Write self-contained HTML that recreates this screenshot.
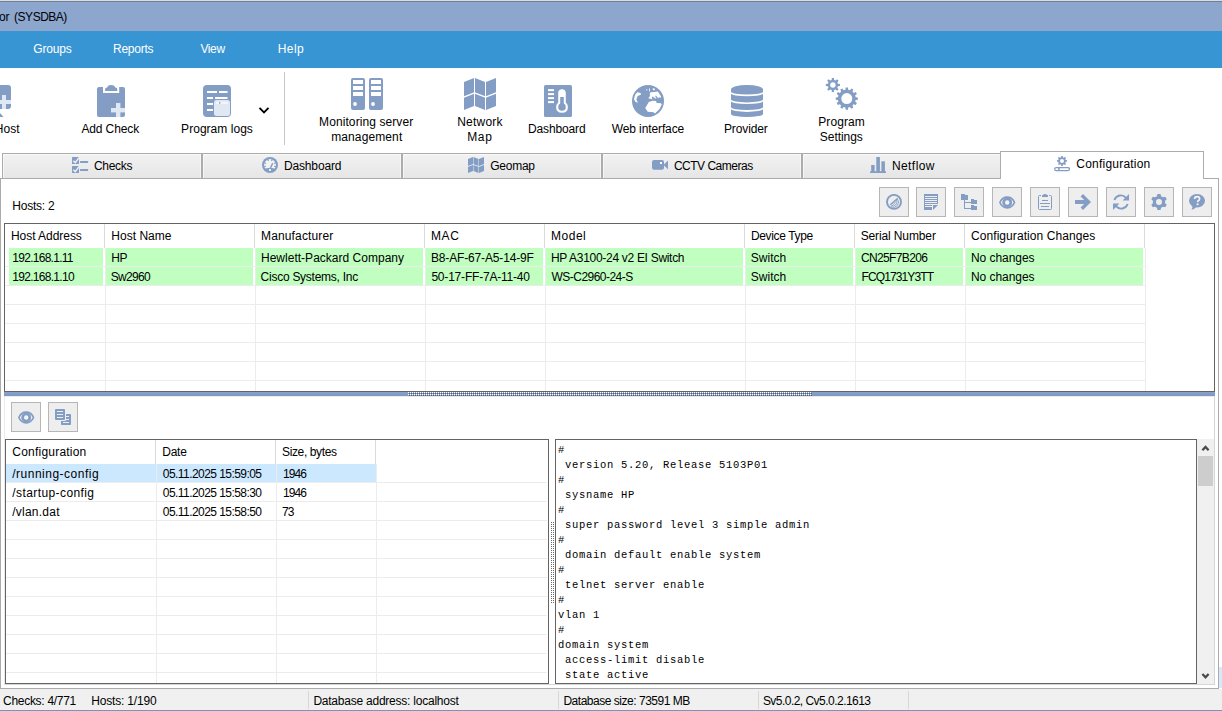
<!DOCTYPE html>
<html><head><meta charset="utf-8"><title>Configuration</title>
<style>
html,body{margin:0;padding:0;background:#fff;}
body{width:1222px;height:711px;position:relative;overflow:hidden;font-family:"Liberation Sans",sans-serif;font-size:12px;}
.a{position:absolute;}
.t{position:absolute;white-space:pre;font-family:"Liberation Sans",sans-serif;font-size:12px;line-height:14px;height:14px;}
</style></head>
<body>
<div class="a" style="left:0px;top:0px;width:1222px;height:1px;background:#dedcd8;"></div>
<div class="a" style="left:0px;top:1px;width:1222px;height:1px;background:#6b80a1;"></div>
<div class="a" style="left:0px;top:2px;width:1222px;height:29px;background:#8ca6ce;"></div>
<div class="a" style="left:0px;top:31px;width:1222px;height:37px;background:#3895d4;"></div>
<div class="a" style="left:284px;top:72px;width:1px;height:73px;background:#c6c6c6;"></div>
<svg class="a" style="left:-17px;top:85px" width="28" height="32" viewBox="0 0 28 32">
      <rect x="0" y="0" width="28" height="24" rx="3" fill="#839dc4"/>
      <rect x="19" y="10" width="4" height="14" fill="#e0e8f3"/><rect x="14" y="15" width="14" height="4" fill="#e0e8f3"/>
      <path d="M17 28 L20.5 32 L10 32 L10 28 Z" fill="#839dc4"/></svg>
<svg class="a" style="left:97px;top:85px" width="28" height="32" viewBox="0 0 28 32">
      <path d="M2 2 H6 V8 H22.2 V2 H26 Q28 2 28 4 V30 Q28 32 26 32 H2 Q0 32 0 30 V4 Q0 2 2 2 Z" fill="#839dc4"/>
      <path d="M8.1 5.9 V4.2 Q8.1 2.6 10 2.4 Q11 0 14.2 0 Q17.4 0 18.4 2.4 Q20.3 2.6 20.3 4.2 V5.9 Z" fill="#839dc4"/>
      <rect x="19" y="18" width="4.4" height="14" fill="#e0e8f3"/><rect x="14" y="23" width="14" height="4.4" fill="#e0e8f3"/></svg>
<svg class="a" style="left:203px;top:85px" width="28" height="32" viewBox="0 0 28 32">
      <rect x="0" y="0" width="28" height="32" rx="4" fill="#839dc4"/>
      <g fill="#fff"><rect x="4" y="6" width="10" height="2"/><rect x="16" y="6" width="8.5" height="2"/>
      <rect x="4" y="12" width="6" height="2"/><rect x="12" y="12" width="12.5" height="2"/>
      <rect x="4" y="18" width="6" height="2"/><rect x="4" y="24" width="6" height="2"/></g>
      <rect x="11" y="15" width="16" height="16" rx="2.5" fill="#e0e8f3"/>
      <rect x="13" y="17.3" width="12" height="1.2" fill="#fff"/><rect x="16" y="17.2" width="1.4" height="1.4" fill="#839dc4"/></svg>
<svg class="a" style="left:258px;top:106px" width="12" height="9" viewBox="0 0 12 9"><path d="M1.5 1.8 L6 6.3 L10.5 1.8" fill="none" stroke="#000" stroke-width="1.9"/></svg>
<svg class="a" style="left:351px;top:78px" width="32" height="32" viewBox="0 0 32 32"><rect x="0" y="0" width="14" height="32" rx="2" fill="#839dc4"/>
      <g fill="#fff"><rect x="2" y="2" width="10" height="4"/><rect x="2" y="8" width="10" height="4"/><rect x="2" y="14" width="10" height="4"/>
      <circle cx="4" cy="26" r="1.9"/></g><rect x="18" y="0" width="14" height="32" rx="2" fill="#839dc4"/>
      <g fill="#fff"><rect x="20" y="2" width="10" height="4"/><rect x="20" y="8" width="10" height="4"/><rect x="20" y="14" width="10" height="4"/>
      <circle cx="22" cy="26" r="1.9"/></g></svg>
<svg class="a" style="left:464px;top:78px" width="32.0" height="32.0" viewBox="0 0 32 32"><g fill="#839dc4">
          <path d="M0 4 L10 0 V28 L0 32 Z"/><path d="M11 0 L21 4 V32 L11 28 Z"/><path d="M22 4 L32 0 V28 L22 32 Z"/></g>
          <g stroke="#fff" stroke-width="1.4" fill="none"><path d="M-1 19.4 L10.5 14.8"/><path d="M10.5 14.8 L21.5 19.2"/><path d="M21.5 19.2 L33 14.6"/></g></svg>
<svg class="a" style="left:544px;top:85px" width="28" height="32" viewBox="0 0 28 32">
      <rect x="0" y="0" width="28" height="32" rx="1.6" fill="#839dc4"/>
      <g fill="#fff"><rect x="4" y="4.1" width="6" height="2"/><rect x="4" y="8.1" width="6" height="2"/><rect x="4" y="12.1" width="6" height="2"/><rect x="4" y="16.1" width="6" height="2"/>
      <path d="M14.2 8 Q14.2 4.2 18 4.2 Q21.8 4.2 21.8 8 V17.6 Q23.9 19.2 23.9 22 Q23.9 27.8 18 27.8 Q12.1 27.8 12.1 22 Q12.1 19.2 14.2 17.6 Z"/></g>
      <path d="M16.2 12 H19.8 V18.6 Q21.8 19.6 21.8 22 Q21.8 25.8 18 25.8 Q14.2 25.8 14.2 22 Q14.2 19.6 16.2 18.6 Z" fill="#839dc4"/></svg>
<svg class="a" style="left:632px;top:85px" width="32" height="32" viewBox="0 0 32 32">
      <circle cx="16" cy="16" r="16" fill="#839dc4"/>
      <g fill="#fff">
      <path d="M5.3 7.3 L8.7 8.1 L8.9 9.8 L5.6 10.9 L4.4 14.6 L5.9 17.7 L3.3 16.8 L1.9 14 L3.3 9.5 Z"/>
      <path d="M17.7 8.7 L18.5 7.3 L22.4 7 L25.8 6.4 L27.5 8.9 L29.2 11.8 L28.2 13 L27 12 L26.2 13.6 L25 12.2 L24 14 L22.8 12.6 L21.6 14.2 L20.2 14.3 L16.3 13.2 L17.7 11.2 Z"/>
      <path d="M14.6 20.8 L16.8 17.1 L20.8 15.7 L24.1 16 L24.4 17.7 L28.9 18.2 L29.8 19.6 L27.5 24.1 L23 28.6 L21.6 27.2 L15.7 26.7 L13.2 23 Z"/>
      <path d="M14 4.2 L15.4 4.4 L15.2 5.4 L14.2 5.2 Z M17.1 3.3 L17.9 3.4 L17.8 6.4 L17 6.2 Z M20.5 3.4 L22.4 3.3 L23 5.2 L21.2 5.3 Z"/>
      </g>
      <path d="M19.9 12.2 L21 11.6 L22.4 12.9 L21.9 14.5 L20.2 14.5 Z M23 10.9 L24.1 10.6 L25.8 12.9 L24.7 13.4 Z M17.3 9.2 L18.3 9.8 L17.7 11.5 L17 10.9 Z" fill="#839dc4"/></svg>
<svg class="a" style="left:731px;top:85px" width="32" height="32" viewBox="0 0 32 32">
      <g fill="#839dc4">
      <path d="M0 4.6 A16 4.6 0 0 1 32 4.6 V6.8 A16 2.6 0 0 1 0 6.8 Z"/>
      <path d="M0 8.4 A16 2.8 0 0 0 32 8.4 V14.6 A16 2.8 0 0 1 0 14.6 Z"/>
      <path d="M0 16.3 A16 2.8 0 0 0 32 16.3 V22.3 A16 2.8 0 0 1 0 22.3 Z"/>
      <path d="M0 24.1 A16 2.8 0 0 0 32 24.1 V28.9 A16 3 0 0 1 0 28.9 Z"/>
      </g></svg>
<svg class="a" style="left:824px;top:76px" width="36" height="36" viewBox="0 0 36 36"><path d="M13.96 7.79 L15.91 7.89 L15.91 10.11 L13.96 10.21 L13.33 11.72 L14.64 13.17 L13.07 14.74 L11.62 13.43 L10.11 14.06 L10.01 16.01 L7.79 16.01 L7.69 14.06 L6.18 13.43 L4.73 14.74 L3.16 13.17 L4.47 11.72 L3.84 10.21 L1.89 10.11 L1.89 7.89 L3.84 7.79 L4.47 6.28 L3.16 4.83 L4.73 3.26 L6.18 4.57 L7.69 3.94 L7.79 1.99 L10.01 1.99 L10.11 3.94 L11.62 4.57 L13.07 3.26 L14.64 4.83 L13.33 6.28 Z M11.60 9.00 A2.7 2.7 0 1 0 6.20 9.00 A2.7 2.7 0 1 0 11.60 9.00 Z" fill="#839dc4" fill-rule="evenodd"/><path d="M31.69 21.19 L33.84 21.44 L33.84 23.76 L31.69 24.01 L31.20 25.83 L32.94 27.11 L31.78 29.12 L29.79 28.26 L28.46 29.59 L29.32 31.58 L27.31 32.74 L26.03 31.00 L24.21 31.49 L23.96 33.64 L21.64 33.64 L21.39 31.49 L19.57 31.00 L18.29 32.74 L16.28 31.58 L17.14 29.59 L15.81 28.26 L13.82 29.12 L12.66 27.11 L14.40 25.83 L13.91 24.01 L11.76 23.76 L11.76 21.44 L13.91 21.19 L14.40 19.37 L12.66 18.09 L13.82 16.08 L15.81 16.94 L17.14 15.61 L16.28 13.62 L18.29 12.46 L19.57 14.20 L21.39 13.71 L21.64 11.56 L23.96 11.56 L24.21 13.71 L26.03 14.20 L27.31 12.46 L29.32 13.62 L28.46 15.61 L29.79 16.94 L31.78 16.08 L32.94 18.09 L31.20 19.37 Z M28.30 22.60 A5.5 5.5 0 1 0 17.30 22.60 A5.5 5.5 0 1 0 28.30 22.60 Z" fill="#839dc4" fill-rule="evenodd"/></svg>
<div class="a" style="left:2px;top:153px;width:200px;height:26px;background:linear-gradient(#f2f2f2,#e6e6e6);border:1px solid #acacac;box-sizing:border-box;box-shadow:inset 1px 1px 0 rgba(255,255,255,.55), inset -1px 0 0 rgba(255,255,255,.55);"></div>
<div class="a" style="left:202px;top:153px;width:200px;height:26px;background:linear-gradient(#f2f2f2,#e6e6e6);border:1px solid #acacac;box-sizing:border-box;box-shadow:inset 1px 1px 0 rgba(255,255,255,.55), inset -1px 0 0 rgba(255,255,255,.55);"></div>
<div class="a" style="left:402px;top:153px;width:200px;height:26px;background:linear-gradient(#f2f2f2,#e6e6e6);border:1px solid #acacac;box-sizing:border-box;box-shadow:inset 1px 1px 0 rgba(255,255,255,.55), inset -1px 0 0 rgba(255,255,255,.55);"></div>
<div class="a" style="left:602px;top:153px;width:200px;height:26px;background:linear-gradient(#f2f2f2,#e6e6e6);border:1px solid #acacac;box-sizing:border-box;box-shadow:inset 1px 1px 0 rgba(255,255,255,.55), inset -1px 0 0 rgba(255,255,255,.55);"></div>
<div class="a" style="left:802px;top:153px;width:200px;height:26px;background:linear-gradient(#f2f2f2,#e6e6e6);border:1px solid #acacac;box-sizing:border-box;box-shadow:inset 1px 1px 0 rgba(255,255,255,.55), inset -1px 0 0 rgba(255,255,255,.55);"></div>
<div class="a" style="left:0;top:178px;width:1219px;height:511px;border:1px solid #ababab;box-sizing:border-box;background:#fff"></div>
<div class="a" style="left:1000px;top:151px;width:204px;height:28px;border:1px solid #acacac;border-bottom:none;box-sizing:border-box;background:#fff"></div>
<svg class="a" style="left:72px;top:157px" width="17" height="16" viewBox="0 0 17 16"><g fill="#839dc4"><rect x="0" y="0" width="7" height="7" rx="0.5"/><rect x="0" y="9" width="7" height="7" rx="0.5"/>
      <rect x="8" y="4" width="8.1" height="2" rx="0.4"/><rect x="8" y="12" width="8.1" height="2" rx="0.4"/></g>
      <g stroke="#f1f1ef" stroke-width="1.5" fill="none"><path d="M1.2 3.8 L3.3 5.6 L7 0.6"/><path d="M1.2 12.8 L3.3 14.6 L7 9.6"/></g></svg>
<svg class="a" style="left:262px;top:157px" width="16" height="16" viewBox="0 0 16 16"><circle cx="8" cy="8" r="8" fill="#839dc4"/>
      <path d="M3.3 11.57 L8 10.7 L12.7 11.57 A5.9 5.9 0 1 0 3.3 11.57 Z" fill="#f3f3f1"/>
      <g stroke="#839dc4" stroke-width="1.1"><path d="M2.31 5.81 L3.99 6.46"/><path d="M5.81 2.31 L6.46 3.99"/><path d="M10.19 2.31 L9.54 3.99"/><path d="M13.69 5.81 L12.01 6.46"/><path d="M13.83 9.78 L12.11 9.26"/><path d="M2.17 9.78 L3.89 9.26"/><path d="M8.5 10.9 L10.7 6.1" stroke-width="1.35"/></g>
      <rect x="7" y="12" width="2" height="1.9" fill="#f3f3f1"/></svg>
<svg class="a" style="left:468px;top:157px" width="16.0" height="16.0" viewBox="0 0 32 32"><g fill="#839dc4">
          <path d="M0 4 L10 0 V28 L0 32 Z"/><path d="M11 0 L21 4 V32 L11 28 Z"/><path d="M22 4 L32 0 V28 L22 32 Z"/></g>
          <g stroke="#fff" stroke-width="1.4" fill="none"><path d="M-1 19.4 L10.5 14.8"/><path d="M10.5 14.8 L21.5 19.2"/><path d="M21.5 19.2 L33 14.6"/></g></svg>
<svg class="a" style="left:652px;top:159px" width="17" height="12" viewBox="0 0 17 12"><rect x="0" y="1" width="12" height="9.8" rx="2" fill="#839dc4"/><path d="M11.5 5.9 L16 1.6 V10.2 Z" fill="#839dc4"/><rect x="8" y="3" width="2" height="2" fill="#fff"/></svg>
<svg class="a" style="left:870px;top:157px" width="16" height="16" viewBox="0 0 16 16"><g fill="#839dc4"><rect x="1.2" y="8" width="3.4" height="7"/><rect x="6.3" y="0" width="3.6" height="15"/><rect x="11.4" y="4.3" width="3.5" height="11"/><rect x="0" y="14.2" width="16" height="1.8" rx="0.6"/></g></svg>
<svg class="a" style="left:1054px;top:155px" width="16" height="17" viewBox="0 0 16 17"><path d="M11.69 5.03 L13.04 5.19 L13.04 6.71 L11.69 6.87 L11.26 7.91 L12.10 8.98 L11.03 10.05 L9.96 9.21 L8.92 9.64 L8.76 10.99 L7.24 10.99 L7.08 9.64 L6.04 9.21 L4.97 10.05 L3.90 8.98 L4.74 7.91 L4.31 6.87 L2.96 6.71 L2.96 5.19 L4.31 5.03 L4.74 3.99 L3.90 2.92 L4.97 1.85 L6.04 2.69 L7.08 2.26 L7.24 0.91 L8.76 0.91 L8.92 2.26 L9.96 2.69 L11.03 1.85 L12.10 2.92 L11.26 3.99 Z M10.00 5.95 A2.0 2.0 0 1 0 6.00 5.95 A2.0 2.0 0 1 0 10.00 5.95 Z" fill="#839dc4" fill-rule="evenodd"/>
      <rect x="0.65" y="12.5" width="14.8" height="3.1" rx="1.55" fill="#fff" stroke="#839dc4" stroke-width="1.25"/><rect x="4.1" y="12.5" width="1.6" height="3.1" fill="#839dc4"/></svg>
<div class="a" style="left:879px;top:187px;width:30px;height:30px;background:#eeeeee;border:1px solid #b6b6b6;box-sizing:border-box;"></div>
<div class="a" style="left:916px;top:187px;width:30px;height:30px;background:#eeeeee;border:1px solid #b6b6b6;box-sizing:border-box;"></div>
<div class="a" style="left:954px;top:187px;width:30px;height:30px;background:#eeeeee;border:1px solid #b6b6b6;box-sizing:border-box;"></div>
<div class="a" style="left:992px;top:187px;width:30px;height:30px;background:#eeeeee;border:1px solid #b6b6b6;box-sizing:border-box;"></div>
<div class="a" style="left:1030px;top:187px;width:30px;height:30px;background:#eeeeee;border:1px solid #b6b6b6;box-sizing:border-box;"></div>
<div class="a" style="left:1068px;top:187px;width:30px;height:30px;background:#eeeeee;border:1px solid #b6b6b6;box-sizing:border-box;"></div>
<div class="a" style="left:1106px;top:187px;width:30px;height:30px;background:#eeeeee;border:1px solid #b6b6b6;box-sizing:border-box;"></div>
<div class="a" style="left:1144px;top:187px;width:30px;height:30px;background:#eeeeee;border:1px solid #b6b6b6;box-sizing:border-box;"></div>
<div class="a" style="left:1182px;top:187px;width:30px;height:30px;background:#eeeeee;border:1px solid #b6b6b6;box-sizing:border-box;"></div>
<div class="a" style="left:11px;top:402px;width:30px;height:30px;background:#eeeeee;border:1px solid #b6b6b6;box-sizing:border-box;"></div>
<div class="a" style="left:48px;top:402px;width:30px;height:30px;background:#eeeeee;border:1px solid #b6b6b6;box-sizing:border-box;"></div>
<svg class="a" style="left:886px;top:194px" width="16" height="16" viewBox="0 0 16 16"><circle cx="8" cy="7.9" r="7" fill="none" stroke="#839dc4" stroke-width="1.9"/>
      <g fill="none" stroke="#839dc4" stroke-width="0.9"><path d="M8.73 6.85 A1.9 1.9 0 0 1 6.13 9.60"/><path d="M10.02 5.74 A3.6 3.6 0 0 1 5.08 10.94"/><path d="M11.40 4.90 A5.2 5.2 0 0 1 4.70 12.60"/><path d="M4.2 10.8 L11.8 4.2" stroke-width="1.3"/></g></svg>
<svg class="a" style="left:924px;top:194px" width="14" height="16" viewBox="0 0 14 16"><g fill="#839dc4" shape-rendering="crispEdges"><rect x="0" y="0" width="14" height="10"/><rect x="0" y="10" width="8" height="6"/></g><path d="M9 11 H14 L9 16 Z" fill="#839dc4"/>
      <g fill="#eee" shape-rendering="crispEdges"><rect x="1" y="2" width="12" height="1"/><rect x="1" y="4" width="12" height="1"/><rect x="1" y="6" width="12" height="1"/><rect x="1" y="8" width="12" height="1"/><rect x="1" y="10" width="7" height="1"/><rect x="1" y="12" width="7" height="1"/></g></svg>
<svg class="a" style="left:961px;top:194px" width="16" height="16" viewBox="0 0 16 16"><g fill="#839dc4" shape-rendering="crispEdges"><rect x="0" y="0" width="4" height="1"/><rect x="0" y="1" width="7" height="5"/>
      <rect x="10" y="5" width="3" height="1"/><rect x="10" y="6" width="6" height="4"/><rect x="10" y="11" width="3" height="1"/><rect x="10" y="12" width="6" height="4"/>
      <rect x="3" y="6" width="1" height="9"/><rect x="3" y="8" width="7" height="1"/><rect x="3" y="14" width="7" height="1"/></g></svg>
<svg class="a" style="left:998.8px;top:195.5px" width="17" height="13" viewBox="0 0 17 13"><path d="M0.9 6.5 C2.2 3.3 5.4 1.2 8.2 1.2 C11 1.2 14.2 3.3 15.5 6.5 C14.2 9.7 11 11.8 8.2 11.8 C5.4 11.8 2.2 9.7 0.9 6.5 Z" fill="#f1f1f1" stroke="#839dc4" stroke-width="1.7" stroke-linejoin="round"/>
          <circle cx="8.2" cy="6.5" r="4.9" fill="#839dc4"/><circle cx="8.2" cy="6.5" r="2.2" fill="#f4f4f4"/></svg>
<svg class="a" style="left:1038px;top:194px" width="14" height="16" viewBox="0 0 14 16"><path d="M3 1.5 H1.5 Q0.5 1.5 0.5 2.5 V14.5 Q0.5 15.5 1.5 15.5 H12.5 Q13.5 15.5 13.5 14.5 V2.5 Q13.5 1.5 12.5 1.5 H11.2" fill="none" stroke="#839dc4" stroke-width="1"/>
      <path d="M4 3 V1.6 Q4 1 4.8 1 H5 Q5.4 0 7 0 Q8.6 0 9 1 H9.2 Q10 1 10 1.6 V3 Z" fill="#839dc4"/>
      <g fill="#839dc4" shape-rendering="crispEdges"><rect x="4" y="6" width="6" height="1"/><rect x="2" y="9" width="10" height="1"/><rect x="3" y="12" width="8" height="1"/></g></svg>
<svg class="a" style="left:1074px;top:193px" width="18" height="18" viewBox="0 0 18 18"><path d="M1 7 H10.2 L6.6 3.4 L9 1 L17 9 L9 17 L6.6 14.6 L10.2 11 H1 Z" fill="#839dc4"/></svg>
<svg class="a" style="left:1113px;top:194px" width="16" height="16" viewBox="0 0 16 16"><g fill="none" stroke="#839dc4" stroke-width="1.9"><path d="M1.4 6 A6.8 6.8 0 0 1 13 3.8"/><path d="M14.6 10 A6.8 6.8 0 0 1 3 12.2"/></g>
      <path d="M16 0 V6.4 H9.6 Z" fill="#839dc4"/><path d="M0 16 V9.6 H6.4 Z" fill="#839dc4"/></svg>
<svg class="a" style="left:1151px;top:194px" width="16" height="16" viewBox="0 0 16 16"><path d="M14.09 9.16 L15.74 10.70 L14.21 13.36 L12.05 12.69 L10.04 13.86 L9.54 16.05 L6.46 16.05 L5.96 13.86 L3.95 12.69 L1.79 13.36 L0.26 10.70 L1.91 9.16 L1.91 6.84 L0.26 5.30 L1.79 2.64 L3.95 3.31 L5.96 2.14 L6.46 -0.05 L9.54 -0.05 L10.04 2.14 L12.05 3.31 L14.21 2.64 L15.74 5.30 L14.09 6.84 Z M11.00 8.00 A3 3 0 1 0 5.00 8.00 A3 3 0 1 0 11.00 8.00 Z" fill="#839dc4" fill-rule="evenodd"/></svg>
<svg class="a" style="left:1189px;top:194px" width="16" height="16" viewBox="0 0 16 16"><ellipse cx="8" cy="6.7" rx="8" ry="6.7" fill="#839dc4"/><path d="M3.4 11 Q3.8 14 2.4 15.8 Q6 15 7.6 12.6 Z" fill="#839dc4"/>
      <path d="M5.6 5 Q5.6 2.6 8.1 2.6 Q10.6 2.6 10.6 4.8 Q10.6 6.2 9.2 6.8 Q8.6 7.1 8.6 8.2" fill="none" stroke="#f4f4f4" stroke-width="1.7"/><rect x="7.7" y="9.4" width="1.8" height="1.8" fill="#f4f4f4"/></svg>
<svg class="a" style="left:17.8px;top:410.5px" width="17" height="13" viewBox="0 0 17 13"><path d="M0.9 6.5 C2.2 3.3 5.4 1.2 8.2 1.2 C11 1.2 14.2 3.3 15.5 6.5 C14.2 9.7 11 11.8 8.2 11.8 C5.4 11.8 2.2 9.7 0.9 6.5 Z" fill="#f1f1f1" stroke="#839dc4" stroke-width="1.7" stroke-linejoin="round"/>
          <circle cx="8.2" cy="6.5" r="4.9" fill="#839dc4"/><circle cx="8.2" cy="6.5" r="2.2" fill="#f4f4f4"/></svg>
<svg class="a" style="left:55px;top:409px" width="16" height="16" viewBox="0 0 16 16"><rect x="0" y="0" width="10" height="11" rx="1" fill="#839dc4"/>
      <path d="M11 5.6 Q11 5 11.6 5 H15.2 Q16 5 16 5.8 V15.2 Q16 16 15.2 16 H6.8 Q6 16 6 15.2 V12 H10.2 L11 11.2 Z" fill="#839dc4"/>
      <g fill="#eee" shape-rendering="crispEdges"><rect x="2" y="2" width="6" height="1"/><rect x="2" y="5" width="6" height="1"/><rect x="2" y="8" width="6" height="1"/>
      <rect x="11" y="7" width="3" height="1"/><rect x="11" y="10" width="3" height="1"/><rect x="8" y="13" width="6" height="1"/></g></svg>
<div class="a" style="left:4px;top:223px;width:1211px;height:169px;border:1px solid #646464;box-sizing:border-box;background:#fff"></div>
<div class="a" style="left:5px;top:266px;width:1140px;height:1px;background:#ececec;"></div>
<div class="a" style="left:5px;top:285px;width:1140px;height:1px;background:#ececec;"></div>
<div class="a" style="left:5px;top:304px;width:1140px;height:1px;background:#ececec;"></div>
<div class="a" style="left:5px;top:323px;width:1140px;height:1px;background:#ececec;"></div>
<div class="a" style="left:5px;top:342px;width:1140px;height:1px;background:#ececec;"></div>
<div class="a" style="left:5px;top:361px;width:1140px;height:1px;background:#ececec;"></div>
<div class="a" style="left:5px;top:380px;width:1140px;height:1px;background:#ececec;"></div>
<div class="a" style="left:104px;top:224px;width:1px;height:24px;background:#dadada;"></div>
<div class="a" style="left:105px;top:248px;width:1px;height:143px;background:#ececec;"></div>
<div class="a" style="left:254px;top:224px;width:1px;height:24px;background:#dadada;"></div>
<div class="a" style="left:255px;top:248px;width:1px;height:143px;background:#ececec;"></div>
<div class="a" style="left:424px;top:224px;width:1px;height:24px;background:#dadada;"></div>
<div class="a" style="left:425px;top:248px;width:1px;height:143px;background:#ececec;"></div>
<div class="a" style="left:544px;top:224px;width:1px;height:24px;background:#dadada;"></div>
<div class="a" style="left:545px;top:248px;width:1px;height:143px;background:#ececec;"></div>
<div class="a" style="left:744px;top:224px;width:1px;height:24px;background:#dadada;"></div>
<div class="a" style="left:745px;top:248px;width:1px;height:143px;background:#ececec;"></div>
<div class="a" style="left:854px;top:224px;width:1px;height:24px;background:#dadada;"></div>
<div class="a" style="left:855px;top:248px;width:1px;height:143px;background:#ececec;"></div>
<div class="a" style="left:964px;top:224px;width:1px;height:24px;background:#dadada;"></div>
<div class="a" style="left:965px;top:248px;width:1px;height:143px;background:#ececec;"></div>
<div class="a" style="left:1144px;top:224px;width:1px;height:24px;background:#dadada;"></div>
<div class="a" style="left:1145px;top:248px;width:1px;height:143px;background:#ececec;"></div>
<div class="a" style="left:9px;top:248px;width:94px;height:18px;background:#c0ffc0;"></div>
<div class="a" style="left:106px;top:248px;width:147px;height:18px;background:#c0ffc0;"></div>
<div class="a" style="left:256px;top:248px;width:167px;height:18px;background:#c0ffc0;"></div>
<div class="a" style="left:426px;top:248px;width:117px;height:18px;background:#c0ffc0;"></div>
<div class="a" style="left:546px;top:248px;width:197px;height:18px;background:#c0ffc0;"></div>
<div class="a" style="left:746px;top:248px;width:107px;height:18px;background:#c0ffc0;"></div>
<div class="a" style="left:856px;top:248px;width:107px;height:18px;background:#c0ffc0;"></div>
<div class="a" style="left:966px;top:248px;width:177px;height:18px;background:#c0ffc0;"></div>
<div class="a" style="left:103px;top:248px;width:5px;height:18px;background:transparent;"></div>
<div class="a" style="left:253px;top:248px;width:5px;height:18px;background:transparent;"></div>
<div class="a" style="left:423px;top:248px;width:5px;height:18px;background:transparent;"></div>
<div class="a" style="left:543px;top:248px;width:5px;height:18px;background:transparent;"></div>
<div class="a" style="left:743px;top:248px;width:5px;height:18px;background:transparent;"></div>
<div class="a" style="left:853px;top:248px;width:5px;height:18px;background:transparent;"></div>
<div class="a" style="left:963px;top:248px;width:5px;height:18px;background:transparent;"></div>
<div class="a" style="left:9px;top:267px;width:94px;height:18px;background:#c0ffc0;"></div>
<div class="a" style="left:106px;top:267px;width:147px;height:18px;background:#c0ffc0;"></div>
<div class="a" style="left:256px;top:267px;width:167px;height:18px;background:#c0ffc0;"></div>
<div class="a" style="left:426px;top:267px;width:117px;height:18px;background:#c0ffc0;"></div>
<div class="a" style="left:546px;top:267px;width:197px;height:18px;background:#c0ffc0;"></div>
<div class="a" style="left:746px;top:267px;width:107px;height:18px;background:#c0ffc0;"></div>
<div class="a" style="left:856px;top:267px;width:107px;height:18px;background:#c0ffc0;"></div>
<div class="a" style="left:966px;top:267px;width:177px;height:18px;background:#c0ffc0;"></div>
<div class="a" style="left:103px;top:267px;width:5px;height:18px;background:transparent;"></div>
<div class="a" style="left:253px;top:267px;width:5px;height:18px;background:transparent;"></div>
<div class="a" style="left:423px;top:267px;width:5px;height:18px;background:transparent;"></div>
<div class="a" style="left:543px;top:267px;width:5px;height:18px;background:transparent;"></div>
<div class="a" style="left:743px;top:267px;width:5px;height:18px;background:transparent;"></div>
<div class="a" style="left:853px;top:267px;width:5px;height:18px;background:transparent;"></div>
<div class="a" style="left:963px;top:267px;width:5px;height:18px;background:transparent;"></div>
<div class="a" style="left:4px;top:392px;width:1211px;height:4px;background:linear-gradient(#87a2ca,#7c98c1)"></div>
<svg class="a" style="left:408px;top:392px" width="404" height="4"><defs><pattern id="gp" width="2" height="2" patternUnits="userSpaceOnUse"><rect width="2" height="2" fill="#809cc4"/><rect width="1" height="1" fill="#fff"/><rect x="1" y="1" width="1" height="1" fill="#5f5f5f"/></pattern></defs><rect width="404" height="4" fill="url(#gp)"/></svg>
<div class="a" style="left:4px;top:396px;width:1211px;height:289px;border:1px solid #d6d6d6;border-top-color:#ebebeb;border-left-color:#ebebeb;box-sizing:border-box"></div>
<div class="a" style="left:5px;top:439px;width:544px;height:245px;border:1px solid #646464;box-sizing:border-box;background:#fff"></div>
<div class="a" style="left:6px;top:482px;width:541px;height:1px;background:#ececec;"></div>
<div class="a" style="left:6px;top:501px;width:541px;height:1px;background:#ececec;"></div>
<div class="a" style="left:6px;top:520px;width:541px;height:1px;background:#ececec;"></div>
<div class="a" style="left:6px;top:539px;width:541px;height:1px;background:#ececec;"></div>
<div class="a" style="left:6px;top:558px;width:541px;height:1px;background:#ececec;"></div>
<div class="a" style="left:6px;top:577px;width:541px;height:1px;background:#ececec;"></div>
<div class="a" style="left:6px;top:596px;width:541px;height:1px;background:#ececec;"></div>
<div class="a" style="left:6px;top:615px;width:541px;height:1px;background:#ececec;"></div>
<div class="a" style="left:6px;top:634px;width:541px;height:1px;background:#ececec;"></div>
<div class="a" style="left:6px;top:653px;width:541px;height:1px;background:#ececec;"></div>
<div class="a" style="left:6px;top:672px;width:541px;height:1px;background:#ececec;"></div>
<div class="a" style="left:155px;top:440px;width:1px;height:24px;background:#dadada;"></div>
<div class="a" style="left:156px;top:464px;width:1px;height:219px;background:#ececec;"></div>
<div class="a" style="left:275px;top:440px;width:1px;height:24px;background:#dadada;"></div>
<div class="a" style="left:276px;top:464px;width:1px;height:219px;background:#ececec;"></div>
<div class="a" style="left:375px;top:440px;width:1px;height:24px;background:#dadada;"></div>
<div class="a" style="left:376px;top:464px;width:1px;height:219px;background:#ececec;"></div>
<div class="a" style="left:6px;top:464px;width:150px;height:18px;background:#cce8ff;"></div>
<div class="a" style="left:157px;top:464px;width:119px;height:18px;background:#cce8ff;"></div>
<div class="a" style="left:277px;top:464px;width:99px;height:18px;background:#cce8ff;"></div>
<svg class="a" style="left:550px;top:521px" width="4" height="82"><rect width="4" height="82" fill="url(#gp2)"/><defs><pattern id="gp2" width="2" height="2" patternUnits="userSpaceOnUse"><rect width="2" height="2" fill="#fff"/><rect x="1" y="1" width="1" height="1" fill="#6a6a6a"/></pattern></defs></svg>
<div class="a" style="left:555px;top:439px;width:642px;height:245px;border:1px solid #646464;box-sizing:border-box;background:#fff"></div>
<div class="a" style="left:1197px;top:439px;width:17px;height:245px;background:#f0f0f0;"></div>
<div class="a" style="left:1198px;top:456px;width:15px;height:30px;background:#cdcdcd;"></div>
<svg class="a" style="left:1201px;top:444px" width="9" height="8" viewBox="0 0 9 8"><path d="M1.4 6.2 L4.5 2.9 L7.6 6.2" fill="none" stroke="#4a4a4a" stroke-width="2.3"/></svg>
<svg class="a" style="left:1201px;top:672px" width="9" height="8" viewBox="0 0 9 8"><path d="M1.4 2 L4.5 5.3 L7.6 2" fill="none" stroke="#4a4a4a" stroke-width="2.3"/></svg>
<div class="a" style="left:0px;top:689px;width:1222px;height:21px;background:#f0f0f0;"></div>
<div class="a" style="left:0px;top:710px;width:1222px;height:1px;background:#7b93b7;"></div>
<div class="a" style="left:308px;top:691px;width:1px;height:18px;background:#d7d7d7;"></div>
<div class="a" style="left:558px;top:691px;width:1px;height:18px;background:#d7d7d7;"></div>
<div class="a" style="left:758px;top:691px;width:1px;height:18px;background:#d7d7d7;"></div>
<div class="a" style="left:908px;top:691px;width:1px;height:18px;background:#d7d7d7;"></div>
<div class="a" style="left:1219px;top:667px;width:3px;height:21px;background:#d6e9fb;"></div>
<pre class="a" style="left:558px;top:443px;margin:0;font-family:'Liberation Mono',monospace;font-size:10.5px;line-height:15px;letter-spacing:0.7px;color:#000;height:240px;overflow:hidden">#
 version 5.20, Release 5103P01
#
 sysname HP
#
 super password level 3 simple admin
#
 domain default enable system
#
 telnet server enable
#
vlan 1
#
domain system
 access-limit disable
 state active</pre>
<span class="t" style="left:-1.10px;top:10px;">or</span>
<span class="t" style="left:14.10px;top:10px;letter-spacing:-0.486px;">(SYSDBA)</span>
<span class="t" style="left:33.30px;top:42px;letter-spacing:-0.180px;color:#fff;">Groups</span>
<span class="t" style="left:113.00px;top:42px;letter-spacing:-0.233px;color:#fff;">Reports</span>
<span class="t" style="left:200.40px;top:42px;letter-spacing:-0.367px;color:#fff;">View</span>
<span class="t" style="left:277.70px;top:42px;letter-spacing:0.433px;color:#fff;">Help</span>
<span class="t" style="left:-29.90px;top:122px;">Add Host</span>
<span class="t" style="left:81.40px;top:122px;letter-spacing:-0.113px;">Add Check</span>
<span class="t" style="left:181.10px;top:122px;letter-spacing:0.036px;">Program logs</span>
<span class="t" style="left:319.10px;top:115px;letter-spacing:0.087px;">Monitoring server</span>
<span class="t" style="left:331.20px;top:130px;letter-spacing:0.111px;">management</span>
<span class="t" style="left:457.20px;top:115px;letter-spacing:0.233px;">Network</span>
<span class="t" style="left:467.20px;top:130px;letter-spacing:0.650px;">Map</span>
<span class="t" style="left:528.00px;top:122px;letter-spacing:-0.138px;">Dashboard</span>
<span class="t" style="left:611.80px;top:122px;letter-spacing:-0.117px;">Web interface</span>
<span class="t" style="left:724.00px;top:122px;letter-spacing:-0.129px;">Provider</span>
<span class="t" style="left:818.20px;top:115px;letter-spacing:0.100px;">Program</span>
<span class="t" style="left:819.80px;top:130px;letter-spacing:-0.043px;">Settings</span>
<span class="t" style="left:93.90px;top:159px;letter-spacing:-0.280px;">Checks</span>
<span class="t" style="left:283.90px;top:159px;letter-spacing:-0.137px;">Dashboard</span>
<span class="t" style="left:490.30px;top:159px;letter-spacing:-0.260px;">Geomap</span>
<span class="t" style="left:673.90px;top:159px;letter-spacing:-0.491px;">CCTV Cameras</span>
<span class="t" style="left:891.90px;top:159px;letter-spacing:0.433px;">Netflow</span>
<span class="t" style="left:1076.30px;top:157px;letter-spacing:0.217px;">Configuration</span>
<span class="t" style="left:12.30px;top:199px;letter-spacing:-0.229px;">Hosts: 2</span>
<span class="t" style="left:11.00px;top:229px;letter-spacing:-0.045px;">Host Address</span>
<span class="t" style="left:111.30px;top:229px;letter-spacing:0.025px;">Host Name</span>
<span class="t" style="left:261.00px;top:229px;letter-spacing:0.145px;">Manufacturer</span>
<span class="t" style="left:431.00px;top:229px;letter-spacing:0.600px;">MAC</span>
<span class="t" style="left:550.90px;top:229px;letter-spacing:0.550px;">Model</span>
<span class="t" style="left:751.00px;top:229px;letter-spacing:-0.360px;">Device Type</span>
<span class="t" style="left:860.70px;top:229px;letter-spacing:-0.125px;">Serial Number</span>
<span class="t" style="left:971.00px;top:229px;letter-spacing:0.070px;">Configuration Changes</span>
<span class="t" style="left:12.30px;top:251px;letter-spacing:-0.727px;">192.168.1.11</span>
<span class="t" style="left:111.30px;top:251px;letter-spacing:-0.500px;">HP</span>
<span class="t" style="left:261.00px;top:251px;letter-spacing:0.014px;">Hewlett-Packard Company</span>
<span class="t" style="left:431.00px;top:251px;letter-spacing:-0.156px;">B8-AF-67-A5-14-9F</span>
<span class="t" style="left:550.90px;top:251px;letter-spacing:-0.300px;">HP A3100-24 v2 EI Switch</span>
<span class="t" style="left:750.70px;top:251px;letter-spacing:0.040px;">Switch</span>
<span class="t" style="left:861.00px;top:251px;letter-spacing:-0.644px;">CN25F7B206</span>
<span class="t" style="left:971.00px;top:251px;letter-spacing:-0.056px;">No changes</span>
<span class="t" style="left:12.30px;top:270px;letter-spacing:-0.709px;">192.168.1.10</span>
<span class="t" style="left:110.80px;top:270px;letter-spacing:-0.700px;">Sw2960</span>
<span class="t" style="left:260.60px;top:270px;letter-spacing:-0.259px;">Cisco Systems, Inc</span>
<span class="t" style="left:431.40px;top:270px;letter-spacing:-0.200px;">50-17-FF-7A-11-40</span>
<span class="t" style="left:551.50px;top:270px;letter-spacing:-0.525px;">WS-C2960-24-S</span>
<span class="t" style="left:750.70px;top:270px;letter-spacing:0.040px;">Switch</span>
<span class="t" style="left:861.50px;top:270px;letter-spacing:-0.880px;">FCQ1731Y3TT</span>
<span class="t" style="left:971.00px;top:270px;letter-spacing:-0.056px;">No changes</span>
<span class="t" style="left:12.30px;top:445px;letter-spacing:0.217px;">Configuration</span>
<span class="t" style="left:162.30px;top:445px;letter-spacing:-0.267px;">Date</span>
<span class="t" style="left:282.10px;top:445px;letter-spacing:-0.380px;">Size, bytes</span>
<span class="t" style="left:12.30px;top:467px;letter-spacing:0.493px;">/running-config</span>
<span class="t" style="left:162.80px;top:467px;letter-spacing:-0.556px;">05.11.2025 15:59:05</span>
<span class="t" style="left:282.90px;top:467px;letter-spacing:-0.867px;">1946</span>
<span class="t" style="left:12.30px;top:486px;letter-spacing:0.407px;">/startup-config</span>
<span class="t" style="left:162.80px;top:486px;letter-spacing:-0.556px;">05.11.2025 15:58:30</span>
<span class="t" style="left:282.90px;top:486px;letter-spacing:-0.867px;">1946</span>
<span class="t" style="left:12.30px;top:505px;letter-spacing:0.225px;">/vlan.dat</span>
<span class="t" style="left:162.80px;top:505px;letter-spacing:-0.556px;">05.11.2025 15:58:50</span>
<span class="t" style="left:282.10px;top:505px;letter-spacing:-0.900px;">73</span>
<span class="t" style="left:3.10px;top:694px;letter-spacing:-0.300px;">Checks: 4/771</span>
<span class="t" style="left:91.20px;top:694px;letter-spacing:-0.173px;">Hosts: 1/190</span>
<span class="t" style="left:313.40px;top:694px;letter-spacing:-0.231px;">Database address: localhost</span>
<span class="t" style="left:563.40px;top:694px;letter-spacing:-0.477px;">Database size: 73591 MB</span>
<span class="t" style="left:762.90px;top:694px;letter-spacing:-0.530px;">Sv5.0.2, Cv5.0.2.1613</span>
</body></html>
